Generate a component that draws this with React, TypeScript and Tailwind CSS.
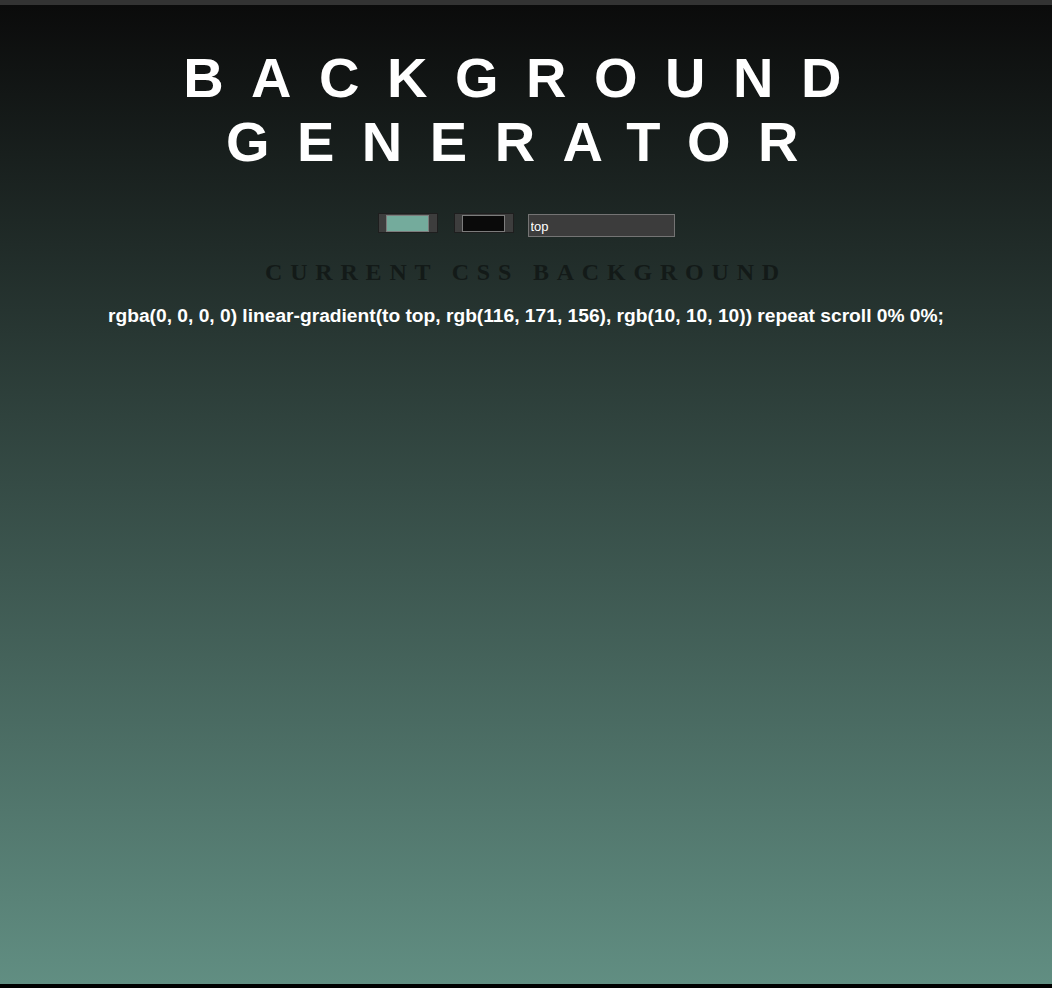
import { useState } from "react";

const sans = { fontFamily: '"Liberation Sans", Arial, sans-serif' };

function ColorBox({ color }: { color: string }) {
  return (
    <div className="flex h-[20px] w-[60px] items-center justify-center border border-[#1e1e1e] bg-[#3d3d3d]">
      <div className="h-[17px] w-[43px] border border-[#7c7c7c]" style={{ backgroundColor: color }} />
    </div>
  );
}

export default function App() {
  const [c1] = useState("#74ab9c");
  const [c2] = useState("#0a0a0a");
  const [dir, setDir] = useState("top");

  return (
    <div className="flex h-screen flex-col bg-black" style={sans}>
      <div className="h-[5px] bg-[#333333]" />
      <div className="flex flex-1 flex-col items-center bg-[linear-gradient(to_bottom,#0b0b0b,#618e82)] pt-[41px]">
        <h1 className="text-center text-[56px] font-bold leading-[64px] tracking-[27.5px] text-white">
          BACKGROUND
          <br />
          GENERATOR
        </h1>

        <div className="mt-[39px] flex items-start">
          <ColorBox color={c1} />
          <div className="ml-[16px]">
            <ColorBox color={c2} />
          </div>
          <input
            value={dir}
            onChange={(e) => setDir(e.target.value)}
            className="ml-[14px] mt-[1px] h-[23px] w-[147px] border border-[#747474] bg-[#3c3c3c] px-[2px] pt-[1px] text-[13px] text-white outline-none"
            style={sans}
          />
        </div>

        <h3
          className="mt-[21px] text-center text-[24px] font-bold leading-[28px] tracking-[7.8px] text-[#131a18]"
          style={{ fontFamily: '"Liberation Serif", "Times New Roman", serif' }}
        >
          CURRENT CSS BACKGROUND
        </h3>

        <p className="mt-[18px] text-center text-[19.2px] font-bold leading-[23px] text-white">
          rgba(0, 0, 0, 0) linear-gradient(to top, rgb(116, 171, 156), rgb(10, 10, 10)) repeat scroll 0% 0%;
        </p>
      </div>
      <div className="h-[4px] bg-black" />
    </div>
  );
}
